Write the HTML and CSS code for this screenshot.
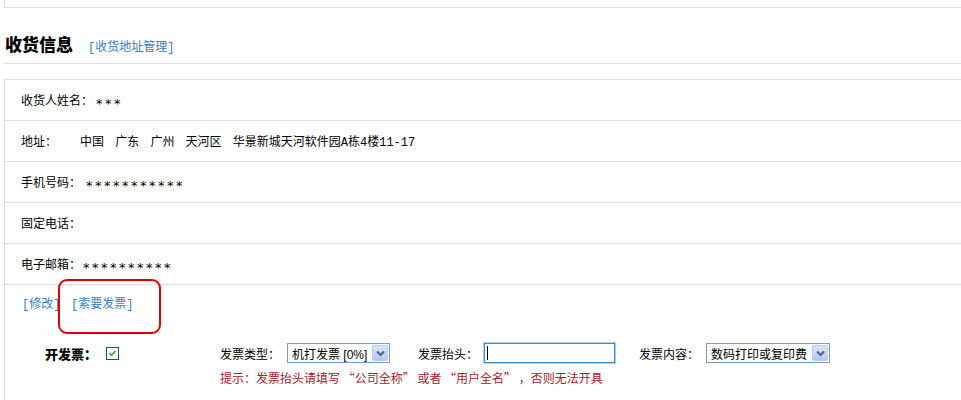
FILE: index.html
```html
<!DOCTYPE html>
<html lang="zh-CN">
<head>
    <meta charset="UTF-8">
    <meta name="viewport" content="width=device-width, initial-scale=1.0">
    <title>收货信息</title>
    <link rel="stylesheet" href="styles.css">
</head>
<body>
    <div class="page">
        <div class="prev-box"></div>

        <div class="section-title">
            <h2>收货信息</h2>
            <a href="#" class="link manage">[收货地址管理]</a>
        </div>

        <div class="address-box">
            <div class="info-row">收货人姓名：<span class="mask name">***</span></div>
            <div class="info-row"><span class="addr-label">地址：</span><span class="addr">中国 广东 广州 天河区 华景新城天河软件园A栋4楼11-17</span></div>
            <div class="info-row">手机号码：<span class="mask phone">***********</span></div>
            <div class="info-row">固定电话：</div>
            <div class="info-row">电子邮箱：<span class="mask">**********</span></div>

            <div class="actions">
                <a href="#" class="link">[修改]</a>
                <a href="#" class="link">[索要发票]</a>
            </div>

            <div class="invoice">
                <div class="invoice-toggle">
                    开发票：
                    <span class="checkbox">
                        <svg width="11" height="11" viewBox="0 0 11 11">
                            <path d="M2.5 5.2 L4.5 7.3 L8.6 3" fill="none" stroke="#2bb032" stroke-width="1.8"/>
                        </svg>
                    </span>
                </div>
                <div class="invoice-fields">
                    <div class="field-row">
                        <label>发票类型：</label>
                        <div class="select select-type">
                            <span class="select-text">机打发票 [0%]</span>
                            <span class="select-arrow">
                                <svg width="9" height="7" viewBox="0 0 9 7"><path d="M1 1.5 L4.5 5 L8 1.5" fill="none" stroke="#4d6185" stroke-width="2"/></svg>
                            </span>
                        </div>
                        <label class="gap">发票抬头：</label>
                        <span class="text-input"><input type="text" name="title"></span>
                        <label class="gap last">发票内容：</label>
                        <div class="select select-content">
                            <span class="select-text">数码打印或复印费</span>
                            <span class="select-arrow">
                                <svg width="9" height="7" viewBox="0 0 9 7"><path d="M1 1.5 L4.5 5 L8 1.5" fill="none" stroke="#4d6185" stroke-width="2"/></svg>
                            </span>
                        </div>
                    </div>
                    <p class="hint">提示：发票抬头请填写 “公司全称” 或者 “用户全名” ，否则无法开具</p>
                </div>
            </div>

            <div class="highlight"></div>
        </div>
    </div>
</body>
</html>
```

FILE: styles.css
```css
* {
    box-sizing: border-box;
}
body {
    margin: 0;
    background-color: #fff;
    color: #000;
    font-family: "Noto Sans CJK SC", sans-serif;
    font-size: 12px;
    overflow: hidden;
}
.page {
    padding-left: 4px;
}
.link {
    color: #3a7dc4;
    text-decoration: none;
    font-family: "Liberation Mono", "Noto Sans CJK SC", monospace;
}
.prev-box {
    height: 8px;
    border-left: 1px solid #ddd;
    border-bottom: 1px solid #ddd;
}
.section-title {
    display: flex;
    flex-wrap: wrap;
    align-content: flex-end;
    align-items: baseline;
    height: 56px;
    padding: 0 0 8px 1px;
    border-bottom: 1px solid #ddd;
}
.section-title h2 {
    margin: 0;
    font-size: 17px;
    line-height: 20px;
    font-weight: 900;
    color: #000;
}
.manage {
    margin-left: 15px;
}
.address-box {
    position: relative;
    margin-top: 15px;
    border-top: 1px solid #ddd;
    border-left: 1px solid #ddd;
    padding-bottom: 20px;
}
.info-row {
    height: 41px;
    line-height: 40px;
    padding-left: 16px;
    border-bottom: 1px solid #ddd;
}
.addr-label {
    display: inline-block;
    width: 59px;
}
.addr {
    font-family: "Liberation Mono", "Noto Sans CJK SC", monospace;
    word-spacing: 4px;
}
.mask {
    margin-left: 2px;
    font-family: "DejaVu Sans", sans-serif;
    font-size: 13px;
    letter-spacing: 2.5px;
    vertical-align: -3px;
}
.mask.name {
    margin-left: 3px;
}
.mask.phone {
    margin-left: 5px;
}
.actions {
    height: 36px;
    line-height: 36px;
    padding-left: 17px;
}
.actions .link + .link {
    margin-left: 8px;
}
.invoice {
    display: flex;
    padding: 22px 0 0 40px;
}
.invoice-toggle {
    display: flex;
    align-items: center;
    width: 175px;
    height: 20px;
    font-size: 13px;
    font-weight: 900;
    color: #000;
}
.checkbox {
    display: inline-flex;
    align-items: center;
    justify-content: center;
    width: 13px;
    height: 13px;
    margin-left: 9px;
    border: 1px solid #1c5180;
    background-color: #fff;
}
.field-row {
    display: flex;
    align-items: center;
    height: 20px;
}
.field-row label {
    margin-right: 7px;
}
.field-row label.gap {
    margin-left: 28px;
    margin-right: 6px;
}
.field-row label.last {
    margin-left: 24px;
    margin-right: 7px;
}
.select {
    display: flex;
    align-items: center;
    justify-content: space-between;
    height: 20px;
    padding-left: 4px;
    border: 1px solid #7f9db9;
    background-color: #fff;
    font-family: "Liberation Sans", "Noto Sans CJK SC", sans-serif;
    font-size: 12px;
}
.select-type {
    width: 103px;
}
.select-content {
    width: 124px;
}
.select-arrow {
    display: flex;
    align-items: center;
    justify-content: center;
    flex: none;
    width: 16px;
    height: 16px;
    margin-right: 1px;
    border: 1px solid #b9cdf3;
    border-radius: 2px;
    background: linear-gradient(#dbe6fc, #b3c9f5);
}
.text-input {
    position: relative;
    display: inline-block;
    width: 131px;
    height: 20px;
}
.text-input input {
    width: 100%;
    height: 100%;
    margin: 0;
    padding: 0 3px;
    border: 1px solid #3c8fcf;
    outline: 1px solid #a9cdea;
}
.text-input::after {
    content: "";
    position: absolute;
    left: 3px;
    top: 3px;
    width: 1px;
    height: 14px;
    background-color: #000;
}
.hint {
    margin: 7px 0 0;
    line-height: 16px;
    color: #a8202a;
}
.highlight {
    position: absolute;
    left: 53px;
    top: 199px;
    width: 103px;
    height: 55px;
    border: 2px solid #e00000;
    border-radius: 9px;
}
```
